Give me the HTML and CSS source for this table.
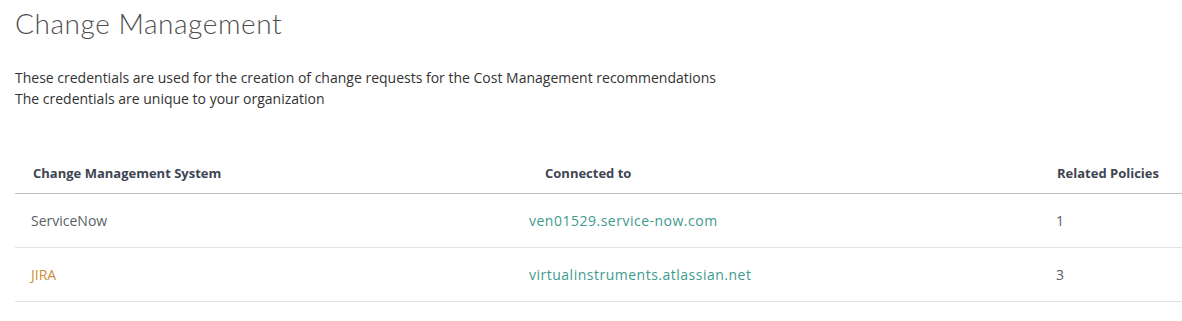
FILE: index.html
```html
<!DOCTYPE html>
<html lang="en">
<head>
<meta charset="utf-8">
<title>Change Management</title>
<link rel="stylesheet" href="styles.css">
</head>
<body>
<main class="page">
  <h1 class="title">Change Management</h1>
  <div class="desc">
    <p>These credentials are used for the creation of change requests for the Cost Management recommendations</p>
    <p>The credentials are unique to your organization</p>
  </div>
  <div class="table">
    <div class="row head">
      <div class="cell h1">Change Management System</div>
      <div class="cell h2">Connected to</div>
      <div class="cell h3">Related Policies</div>
    </div>
    <div class="row">
      <div class="cell c1 sys">ServiceNow</div>
      <div class="cell c2 link">ven01529.service-now.com</div>
      <div class="cell c3 num">1</div>
    </div>
    <div class="row">
      <div class="cell c1 sys jira">JIRA</div>
      <div class="cell c2 link">virtualinstruments.atlassian.net</div>
      <div class="cell c3 num">3</div>
    </div>
  </div>
</main>
</body>
</html>
```
FILE: styles.css
```css
* { box-sizing: border-box; }
html, body { margin: 0; padding: 0; background: #fff; }
body { font-family: "Open Sans", "Liberation Sans", sans-serif; }
.page { padding: 0 0 0 15px; }
.title {
  margin: 0;
  padding-top: 4px;
  font-family: Lato, "Open Sans", sans-serif;
  font-weight: 300;
  font-size: 28px;
  line-height: 38px;
  color: #4f4f4f;
  letter-spacing: 0.55px;
}
.desc { margin-top: 25px; font-size: 14px; line-height: 21px; color: #333; }
.desc p { margin: 0; }
.table { margin-top: 43px; }
.row {
  display: grid;
  grid-template-columns: 498px 527px 1fr;
  height: 54px;
  align-items: center;
  border-bottom: 1px solid #dfe3e8;
  padding-bottom: 1px;
}
.row.head { height: 42px; border-bottom: 1px solid #bfbfc6; padding-bottom: 0; }
.cell { padding-left: 16px; font-size: 14px; }
.head .cell { font-weight: 700; font-size: 13px; color: #3e4552; }
.h1 { padding-left: 18px; }
.h2 { padding-left: 32px; }
.h3 { padding-left: 17px; }
.sys { color: #5a5f66; }
.jira { color: #c8903a; }
.link { color: #3e9a8d; letter-spacing: 0.5px; }
.num { color: #5a5f66; }
```
